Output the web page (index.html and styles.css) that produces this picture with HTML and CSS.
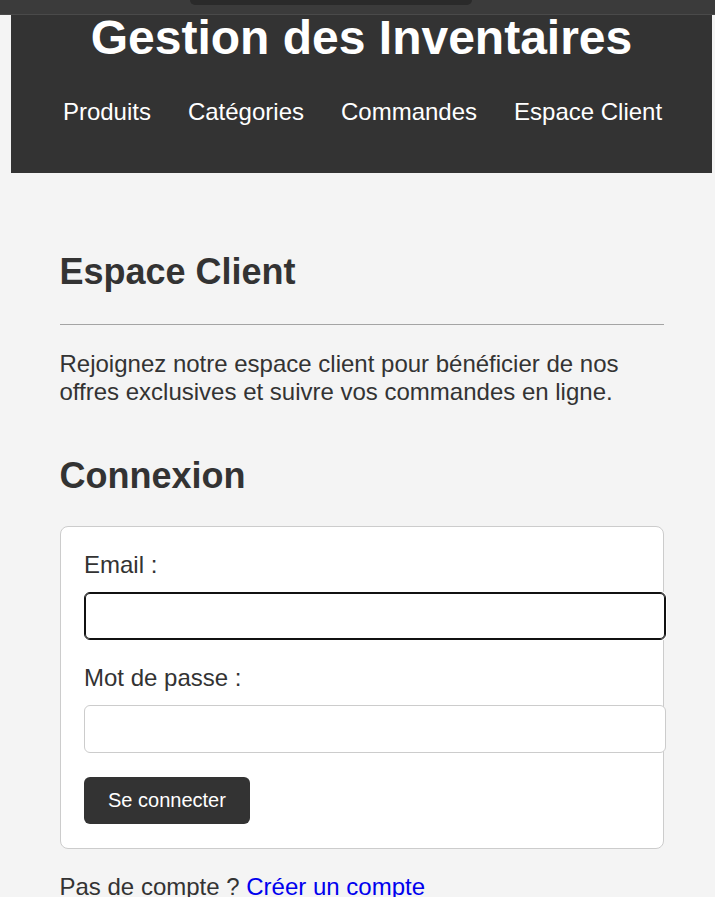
FILE: index.html
```html
<!DOCTYPE html>
<html lang="fr">
<head>
<meta charset="utf-8">
<title>Espace Client - Gestion des Inventaires</title>
<link rel="stylesheet" href="styles.css">
</head>
<body>
<div class="topbar"><div class="topbar-pill"></div></div>
<div class="page">
  <header class="site-header">
    <h1 class="site-title">Gestion des Inventaires</h1>
    <nav class="site-nav">
      <a href="#">Produits</a>
      <a href="#">Catégories</a>
      <a href="#">Commandes</a>
      <a href="#">Espace Client</a>
    </nav>
  </header>
  <main class="content">
    <h2 class="section-title">Espace Client</h2>
    <hr class="divider">
    <p class="intro">Rejoignez notre espace client pour bénéficier de nos offres exclusives et suivre vos commandes en ligne.</p>
    <h2 class="section-title login-title">Connexion</h2>
    <form class="card" onsubmit="return false">
      <label class="field-label" for="email">Email :</label>
      <input class="field-input is-focused" type="email" id="email">
      <label class="field-label" for="password">Mot de passe :</label>
      <input class="field-input" type="password" id="password">
      <button class="btn" type="submit">Se connecter</button>
    </form>
    <p class="signup">Pas de compte ? <a href="#">Créer un compte</a></p>
  </main>
</div>
</body>
</html>
```

FILE: styles.css
```css
* { box-sizing: content-box; }
html, body { margin: 0; padding: 0; }
body {
  background: #f4f4f4;
  font-family: "Liberation Sans", Arial, sans-serif;
  color: #333;
  font-size: 24px;
  line-height: normal;
  overflow: hidden;
}
.topbar {
  position: fixed;
  top: 0; left: 0; right: 0;
  height: 14px;
  background: #3b3b3b;
  border-bottom: 1px solid #4a4a4a;
  z-index: 10;
}
.topbar-pill {
  position: absolute;
  top: 0;
  left: 190px;
  width: 282px;
  height: 5px;
  background: #2a2a2a;
  border-radius: 0 0 12px 12px;
}
.page {
  padding: 0 3px 0 11px;
}
.site-header {
  background: #333;
  color: #fff;
  text-align: center;
  padding: 10px 0 47px;
}
.site-title {
  margin: 0;
  font-size: 48px;
  font-weight: bold;
  line-height: normal;
}
.site-nav {
  margin-top: 33px;
  display: flex;
  justify-content: center;
  gap: 37px;
  padding-left: 2px;
  font-size: 24px;
}
.site-nav a {
  color: #fff;
  text-decoration: none;
}
.content {
  max-width: 604px;
  margin: 0 auto;
  padding-top: 78px;
}
.section-title {
  margin: 0 0 31px;
  font-size: 36px;
  font-weight: bold;
  color: #333;
}
.divider {
  margin: 0;
  height: 0;
  border: 0;
  border-top: 1px solid #a4a4a4;
}
.intro {
  margin: 25px 0 0;
}
.login-title {
  margin: 49px 0 29px;
}
.card {
  background: #fff;
  border: 1px solid #ccc;
  border-radius: 8px;
  padding: 24px 24px 24px 23.5px;
  display: flex;
  flex-direction: column;
  align-items: flex-start;
}
.field-label {
  display: block;
  margin-bottom: 13px;
  font-size: 24px;
  color: #333;
}
.field-input {
  display: block;
  width: 100%;
  height: 46px;
  padding: 0 12.5px;
  margin: 0 0 24px;
  border: 1px solid #ccc;
  border-radius: 6px;
  background: #fff;
  font: 20px "Liberation Sans", Arial, sans-serif;
  outline: none;
}
.field-input.is-focused {
  border-color: #111;
  box-shadow: inset 0 0 0 1px #111, 0 0 0 1px #fff;
}
.btn {
  background: #333;
  color: #fff;
  border: 0;
  border-radius: 6px;
  padding: 12px 24px;
  font: 20px "Liberation Sans", Arial, sans-serif;
  line-height: normal;
  cursor: pointer;
}
.signup {
  margin: 24px 0 0;
}
.signup a {
  color: #0000ee;
  text-decoration: none;
}
```
